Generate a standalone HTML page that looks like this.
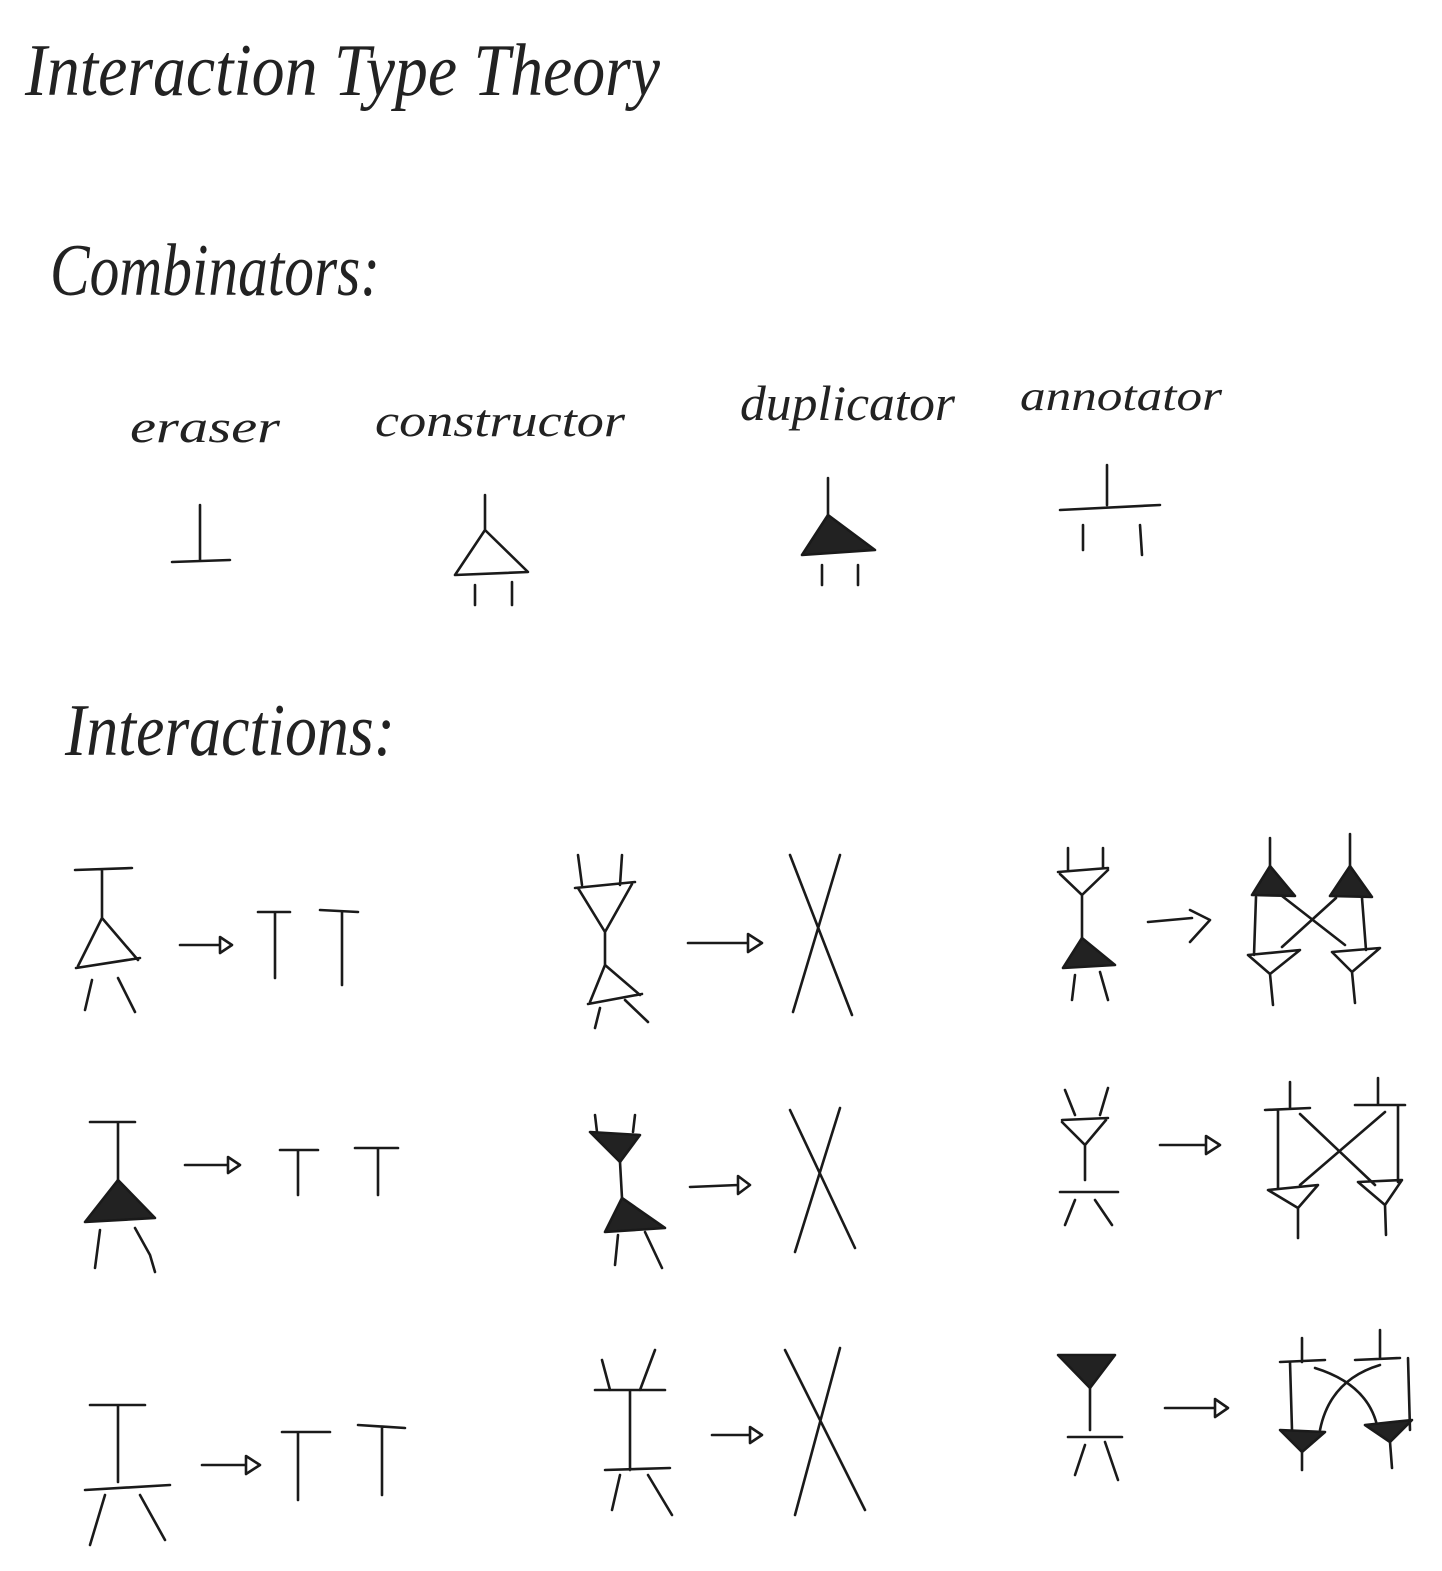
<!DOCTYPE html>
<html><head><meta charset="utf-8"><style>
html,body{margin:0;padding:0;background:#fff}
svg{display:block}
text{font-family:"Liberation Serif",serif;font-style:italic;fill:#222}
.s{stroke:#1a1a1a;stroke-width:2.6;fill:none;stroke-linecap:round;stroke-linejoin:round}
.f{stroke:#1a1a1a;stroke-width:2.6;fill:#222;stroke-linejoin:round}
</style></head><body>
<svg width="1442" height="1571" viewBox="0 0 1442 1571">
<text x="25" y="95" font-size="74" textLength="635" lengthAdjust="spacingAndGlyphs">Interaction Type Theory</text>
<text x="50" y="295" font-size="74" textLength="330" lengthAdjust="spacingAndGlyphs">Combinators:</text>
<text x="130" y="442" font-size="46" textLength="150" lengthAdjust="spacingAndGlyphs">eraser</text>
<text x="375" y="436" font-size="46" textLength="250" lengthAdjust="spacingAndGlyphs">constructor</text>
<text x="740" y="420" font-size="50" textLength="215" lengthAdjust="spacingAndGlyphs">duplicator</text>
<text x="1020" y="410" font-size="42" textLength="202" lengthAdjust="spacingAndGlyphs">annotator</text>
<text x="65" y="755" font-size="74" textLength="330" lengthAdjust="spacingAndGlyphs">Interactions:</text>

<!-- combinators -->
<path class="s" d="M200 505L200 560M172 562L230 560"/>
<path class="s" d="M485 495L485 530 M485 530L455 575L528 572Z M475 585L475 605M512 582L512 605"/>
<path class="s" d="M828 478L828 518"/><path class="f" d="M828 515L802 555L875 550Z"/>
<path class="s" d="M822 565L822 585M858 565L858 585"/>
<path class="s" d="M1107 465L1107 505M1060 510L1160 505M1083 525L1083 550M1140 525L1142 555"/>

<!-- row1 -->
<path class="s" d="M75 870L132 868M102 870L102 918L78 966M102 918L138 960M76 968L140 958M92 980L85 1010M118 978L135 1012"/>
<path class="s" d="M180 945L220 945M220 937L232 945L220 953Z"/>
<path class="s" d="M258 912L290 912M275 912L275 978M320 910L358 912M342 912L342 985"/>
<path class="s" d="M578 855L582 885M622 855L620 885M575 888L635 882M578 888L605 932L632 884M605 932L605 965L590 1002M605 965L640 995M588 1004L642 994M600 1008L595 1028M625 1000L648 1022"/>
<path class="s" d="M688 943L748 943M748 934L762 943L748 952Z"/>
<path class="s" d="M790 855L852 1015M840 855L793 1012"/>
<path class="s" d="M1068 848L1068 870M1103 848L1103 868M1058 872L1108 868M1060 874L1082 895L1108 870M1082 895L1082 940"/>
<path class="f" d="M1082 938L1063 968L1115 965Z"/>
<path class="s" d="M1075 975L1072 1000M1100 972L1108 1000"/>
<path class="s" d="M1148 922L1192 918M1190 910L1210 920L1190 942"/>
<path class="s" d="M1270 838L1270 868M1350 834L1350 868"/>
<path class="f" d="M1270 866L1252 895L1295 896Z"/><path class="f" d="M1350 866L1330 896L1372 897Z"/>
<path class="s" d="M1256 897L1254 955M1362 898L1366 950M1282 896L1345 945M1336 898L1282 947"/>
<path class="s" d="M1248 955L1300 950L1270 974ZM1332 952L1380 948L1352 972ZM1270 974L1273 1005M1352 972L1355 1003"/>

<!-- row2 -->
<path class="s" d="M90 1122L135 1122M118 1122L118 1180"/>
<path class="f" d="M118 1180L85 1222L155 1218Z"/>
<path class="s" d="M100 1230L95 1268M135 1228L150 1255L155 1272"/>
<path class="s" d="M185 1165L228 1165M228 1157L240 1165L228 1173Z"/>
<path class="s" d="M280 1150L318 1150M298 1150L298 1195M355 1148L398 1148M378 1148L378 1195"/>
<path class="s" d="M595 1115L597 1132M635 1115L633 1132"/>
<path class="f" d="M590 1132L640 1135L620 1162Z"/>
<path class="s" d="M620 1162L622 1198"/>
<path class="f" d="M622 1198L605 1232L665 1228Z"/>
<path class="s" d="M618 1235L615 1265M645 1232L662 1268"/>
<path class="s" d="M690 1187L738 1185M738 1176L750 1185L738 1194Z"/>
<path class="s" d="M790 1110L855 1248M840 1108L795 1252"/>
<path class="s" d="M1065 1090L1075 1115M1108 1088L1100 1115M1062 1120L1108 1118M1062 1122L1085 1145L1106 1120M1085 1145L1085 1180M1060 1192L1118 1192M1075 1200L1065 1225M1095 1200L1112 1225"/>
<path class="s" d="M1160 1145L1206 1145M1206 1136L1220 1145L1206 1154Z"/>
<path class="s" d="M1265 1110L1310 1108M1355 1105L1405 1105M1290 1082L1290 1108M1378 1078L1378 1105M1278 1110L1278 1188M1398 1105L1398 1182M1300 1185L1385 1112M1300 1114L1375 1185"/>
<path class="s" d="M1268 1190L1318 1185L1298 1208ZM1358 1182L1402 1180L1385 1205ZM1298 1208L1298 1238M1385 1205L1386 1235"/>

<!-- row3 -->
<path class="s" d="M90 1405L145 1405M118 1405L118 1482M85 1490L170 1485M105 1495L90 1545M140 1495L165 1540"/>
<path class="s" d="M202 1465L246 1465M246 1456L260 1465L246 1474Z"/>
<path class="s" d="M282 1432L330 1432M298 1432L298 1500M358 1425L405 1428M382 1428L382 1495"/>
<path class="s" d="M602 1360L610 1390M655 1350L640 1390M595 1390L665 1390M630 1390L630 1470M605 1470L670 1468M620 1475L612 1510M648 1475L672 1515"/>
<path class="s" d="M712 1435L750 1435M750 1427L762 1435L750 1443Z"/>
<path class="s" d="M785 1350L865 1510M840 1348L795 1515"/>
<path class="f" d="M1058 1355L1115 1355L1090 1388Z"/>
<path class="s" d="M1090 1388L1090 1430M1068 1437L1122 1437M1085 1445L1075 1475M1105 1442L1118 1480"/>
<path class="s" d="M1165 1408L1215 1408M1215 1399L1228 1408L1215 1417Z"/>
<path class="s" d="M1280 1362L1325 1360M1355 1360L1400 1358M1302 1338L1302 1362M1380 1330L1380 1358M1290 1362L1292 1430M1408 1358L1410 1430M1320 1430Q1330 1380 1380 1365M1315 1368Q1370 1385 1378 1430"/>
<path class="f" d="M1280 1430L1325 1432L1302 1452Z"/><path class="f" d="M1365 1425L1412 1420L1390 1442Z"/>
<path class="s" d="M1302 1452L1302 1470M1390 1442L1392 1468"/>
</svg>
</body></html>
